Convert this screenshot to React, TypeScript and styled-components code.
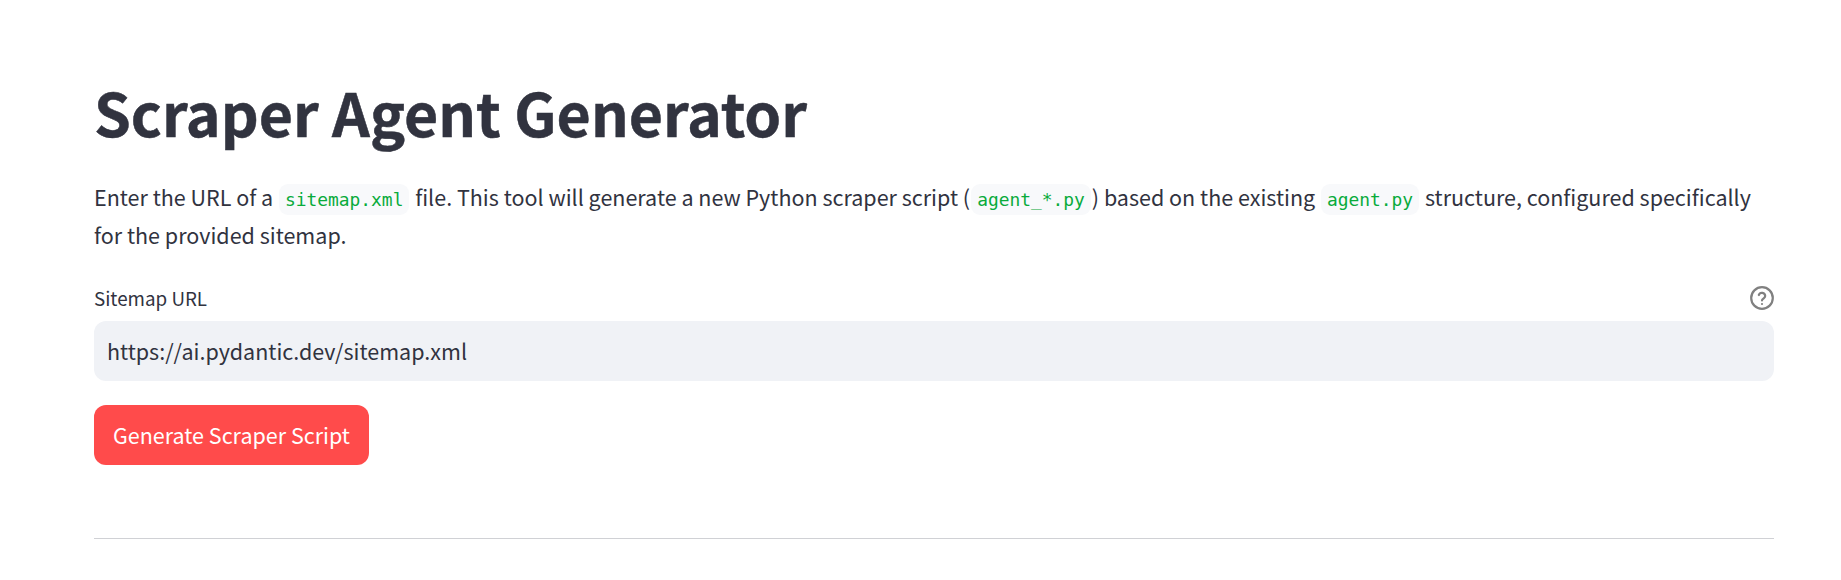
import React from "react";
import styled, { createGlobalStyle } from "styled-components";

const Global = createGlobalStyle`
  html, body { margin: 0; padding: 0; background: #fff; }
  body { font-family: "Noto Sans CJK SC", "Noto Sans", sans-serif; color: #31333f; overflow: hidden; }
`;
const Page = styled.main`
  padding: 80px 67px 0 94px;
  display: flex;
  flex-direction: column;
`;
const Title = styled.h1`
  margin: -4px 0 0;
  font-size: 59px;
  font-weight: 700;
  line-height: 72px;
  -webkit-text-stroke: 0.5px #31333f;
`;
const Intro = styled.p`
  margin: 30px 0 0;
  font-size: 21.5px;
  line-height: 38.4px;
`;
const Code = styled.code`
  font-family: "DejaVu Sans Mono", "Liberation Mono", monospace;
  font-size: 17.9px;
  line-height: 1;
  color: #09ab3b;
  background: #f8f9fb;
  border-radius: 9px;
  padding: 5px 6px;
  margin: 0 1px;
`;
const LabelRow = styled.div`
  margin-top: 28px;
  display: flex;
  justify-content: space-between;
  align-items: center;
  height: 30px;
`;
const Label = styled.label`
  font-size: 18.8px;
`;
const Help = styled.svg`
  width: 24px;
  height: 24px;
  display: block;
`;
const Field = styled.input`
  margin-top: 8px;
  height: 60px;
  box-sizing: border-box;
  border: 0;
  border-radius: 12px;
  background: #f0f2f6;
  padding: 0 13px;
  font: inherit;
  font-size: 21.5px;
  color: #31333f;
`;
const Submit = styled.button`
  margin-top: 24px;
  align-self: flex-start;
  width: 275px;
  height: 60px;
  border: 0;
  border-radius: 12px;
  background: #ff4b4b;
  color: #fff;
  font: inherit;
  font-size: 21.5px;
  padding: 0;
`;
const Rule = styled.hr`
  margin: 73px 0 0;
  border: 0;
  border-top: 1px solid #d0d1d5;
`;

export default function App() {
  return (
    <Page>
      <Global />
      <Title>Scraper Agent Generator</Title>
      <Intro>
        Enter the URL of a <Code>sitemap.xml</Code> file. This tool will generate a new Python scraper script (
        <Code>agent_*.py</Code>) based on the existing <Code>agent.py</Code> structure, configured specifically for the
        provided sitemap.
      </Intro>
      <LabelRow>
        <Label>Sitemap URL</Label>
        <Help viewBox="0 0 24 24" fill="none" stroke="#808080" strokeWidth="2.2" strokeLinecap="round" strokeLinejoin="round">
          <circle cx="12" cy="12" r="10.8" />
          <path d="M8.8 9a3.3 3.3 0 0 1 6.4 1.1c0 2.2-3.2 2.7-3.2 4.3" />
          <path d="M12 18h.01" />
        </Help>
      </LabelRow>
      <Field readOnly value="https://ai.pydantic.dev/sitemap.xml" />
      <Submit>Generate Scraper Script</Submit>
      <Rule />
    </Page>
  );
}
